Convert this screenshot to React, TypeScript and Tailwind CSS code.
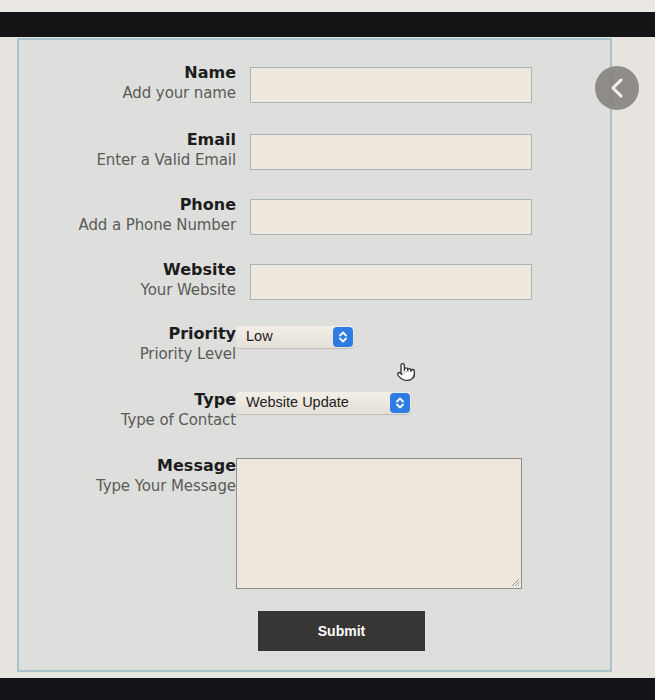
import { Pointer } from "lucide-react";

const font = { fontFamily: '"DejaVu Sans", Verdana, sans-serif' };

type RowProps = {
  label: string;
  hint: string;
  top: string;
  children: React.ReactNode;
};

const Row = ({ label, hint, top, children }: RowProps) => (
  <div className={`flex items-start ${top}`}>
    <div className="w-[217px] shrink-0 text-right">
      <div className="text-[16px] leading-[20px] font-bold text-[#1c1c1c]">{label}</div>
      <div className="text-[15px] leading-[20px] tracking-[-0.1px] text-[#5a5a58]">{hint}</div>
    </div>
    {children}
  </div>
);

const TextBox = () => (
  <div className="ml-[14px] mt-[4px] h-[36px] w-[282px] border border-[#a9b6b8] bg-[#eee8df]" />
);

const Chevrons = () => (
  <div className="flex h-[20px] w-[20px] items-center justify-center rounded-[4px] bg-[#2c7ce3]">
    <svg width="10" height="14" viewBox="0 0 10 14" fill="none" stroke="white" strokeWidth="1.8" strokeLinecap="round" strokeLinejoin="round">
      <path d="M2 5.5 L5 2.5 L8 5.5" />
      <path d="M2 8.5 L5 11.5 L8 8.5" />
    </svg>
  </div>
);

const Select = ({ value, width }: { value: string; width: string }) => (
  <div
    className={`mt-[2px] flex h-[22px] ${width} items-center justify-between rounded-[4px] bg-gradient-to-b from-[#f3eee6] to-[#e4dfd7] pl-[10px] pr-[1px] shadow-[0_1px_1px_rgba(0,0,0,0.15)]`}
  >
    <span className="text-[14.5px] text-[#222]" style={{ fontFamily: '"Liberation Sans", Arial, sans-serif' }}>
      {value}
    </span>
    <Chevrons />
  </div>
);

export default function App() {
  return (
    <div className="relative h-[700px] w-[655px] overflow-hidden bg-[#e7e3de]" style={font}>
      <div className="h-[12px] bg-[#ebe7e2]" />
      <div className="h-[25px] bg-[#141416]" />
      <div className="mt-[1px] ml-[17px] h-[634px] w-[595px] border-2 border-[#a9c3cb] bg-[#dedfdd]">
        <Row label="Name" hint="Add your name" top="mt-[23px]">
          <TextBox />
        </Row>
        <Row label="Email" hint="Enter a Valid Email" top="mt-[27px]">
          <TextBox />
        </Row>
        <Row label="Phone" hint="Add a Phone Number" top="mt-[25px]">
          <TextBox />
        </Row>
        <Row label="Website" hint="Your Website" top="mt-[25px]">
          <TextBox />
        </Row>
        <Row label="Priority" hint="Priority Level" top="mt-[24px]">
          <Select value="Low" width="w-[118px]" />
        </Row>
        <Row label="Type" hint="Type of Contact" top="mt-[26px]">
          <Select value="Website Update" width="w-[175px]" />
        </Row>
        <Row label="Message" hint="Type Your Message" top="mt-[26px]">
          <div className="relative mt-[2px] h-[131px] w-[286px] border border-[#8f8e8a] bg-[#ede7de]">
            <svg className="absolute bottom-[1px] right-[1px]" width="10" height="10" viewBox="0 0 10 10" stroke="#9a9894" strokeWidth="1">
              <path d="M9 2 L2 9 M9 5 L5 9 M9 8 L8 9" />
            </svg>
          </div>
        </Row>
        <div className="mt-[22px] flex">
          <div className="w-[217px] shrink-0" />
          <button
            className="ml-[22px] flex h-[40px] w-[167px] items-center justify-center bg-[#383634] text-[14px] font-bold text-white"
            style={{ fontFamily: '"Liberation Sans", Arial, sans-serif' }}
          >
            Submit
          </button>
        </div>
      </div>
      <div className="mt-[6px] h-[22px] bg-[#131417]" />

      <div className="absolute left-[595px] top-[66px] flex h-[44px] w-[44px] items-center justify-center rounded-full bg-[#858280]/90">
        <svg width="16" height="22" viewBox="0 0 16 22" fill="none" stroke="#f2f2f2" strokeWidth="3" strokeLinecap="round" strokeLinejoin="round">
          <path d="M12 3 L4 11 L12 19" />
        </svg>
      </div>
      <Pointer className="absolute left-[396px] top-[362px] h-[20px] w-[20px] text-[#333]" strokeWidth={1.6} fill="white" />
    </div>
  );
}
